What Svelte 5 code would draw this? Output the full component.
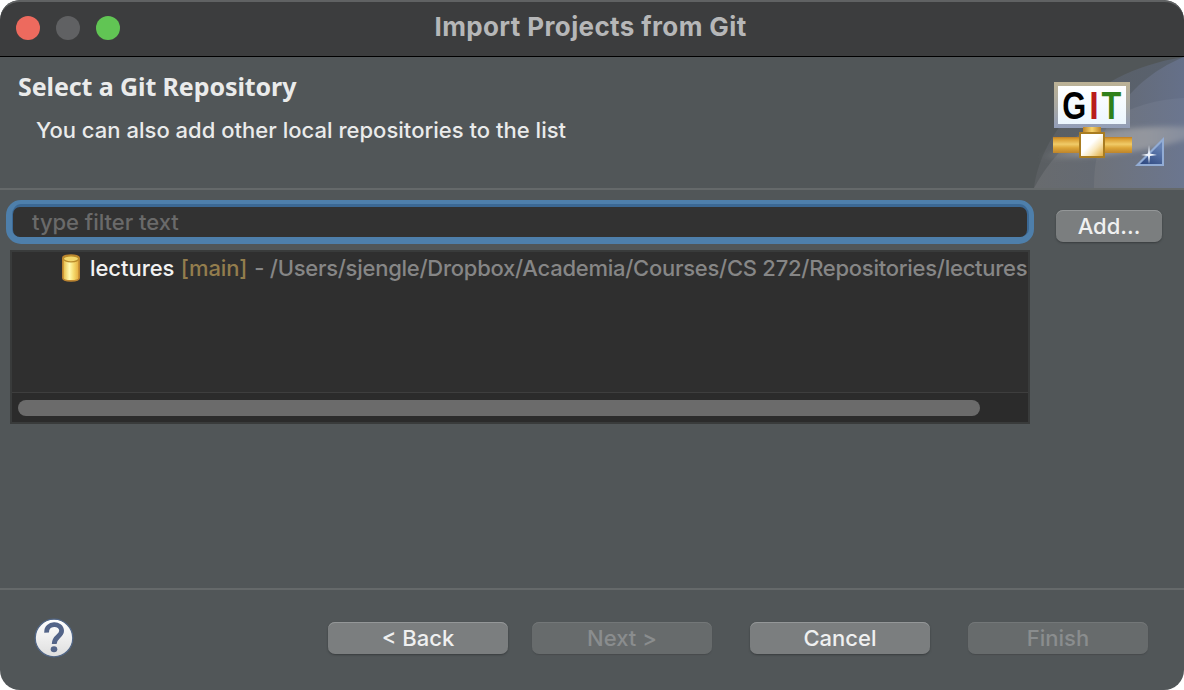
<script>
  const repo = {
    name: 'lectures',
    branch: '[main]',
    path: '- /Users/sjengle/Dropbox/Academia/Courses/CS 272/Repositories/lectures'
  };
  let filter = $state('');
</script>

<div class="window">
  <header class="titlebar">
    <div class="lights"><i class="close"></i><i class="min"></i><i class="max"></i></div>
    <div class="title"><span>Import Projects from Git</span></div>
  </header>

  <section class="banner">
    <div class="copy">
      <h1><span>Select a Git Repository</span></h1>
      <p><span>You can also add other local repositories to the list</span></p>
    </div>
    <svg class="art" width="160" height="131" viewBox="1024 57 160 131" aria-hidden="true">
      <defs>
        <linearGradient id="sky" gradientUnits="userSpaceOnUse" x1="1034" x2="1184" y1="0" y2="0"><stop offset="0" stop-color="#686b6e"/><stop offset=".5" stop-color="#646a74"/><stop offset="1" stop-color="#657089"/></linearGradient>
        <linearGradient id="crescent" gradientUnits="userSpaceOnUse" x1="1034" x2="1184" y1="0" y2="0"><stop offset="0" stop-color="#5a5e61"/><stop offset="1" stop-color="#596270"/></linearGradient>
        <linearGradient id="inner" gradientUnits="userSpaceOnUse" x1="1094" x2="1184" y1="0" y2="0"><stop offset="0" stop-color="#6e7279"/><stop offset="1" stop-color="#6b768f"/></linearGradient>
        <linearGradient id="beam" x1="0" x2="1"><stop offset="0" stop-color="#a0a0a0" stop-opacity="0"/><stop offset=".3" stop-color="#a2a2a4" stop-opacity=".65"/><stop offset=".7" stop-color="#a0a2a6" stop-opacity=".75"/><stop offset="1" stop-color="#9ca1ac" stop-opacity=".5"/></linearGradient>
        <linearGradient id="frame" x2="0" y2="1"><stop offset="0" stop-color="#bcb295"/><stop offset=".5" stop-color="#aaa9a2"/><stop offset="1" stop-color="#929eb9"/></linearGradient>
        <linearGradient id="paper" x2="0" y2="1"><stop offset="0" stop-color="#fff"/><stop offset="1" stop-color="#ecf6fe"/></linearGradient>
        <linearGradient id="pipe" x2="0" y2="1"><stop offset="0" stop-color="#bd7d25"/><stop offset=".12" stop-color="#d99c30"/><stop offset=".45" stop-color="#f0cb68"/><stop offset=".68" stop-color="#dda638"/><stop offset="1" stop-color="#bd842b"/></linearGradient>
        <linearGradient id="stem"><stop offset="0" stop-color="#bd8429"/><stop offset=".5" stop-color="#f6d36d"/><stop offset="1" stop-color="#bd8429"/></linearGradient>
        <linearGradient id="hub" x1="0" y1="0" x2="1" y2="1"><stop offset=".45" stop-color="#fff"/><stop offset=".65" stop-color="#f9e8bd"/><stop offset="1" stop-color="#dda42f"/></linearGradient>
        <linearGradient id="tri" x1="0" y1="1" x2=".5" y2="0"><stop offset="0" stop-color="#2d477f"/><stop offset="1" stop-color="#6682b4"/></linearGradient>
        <filter id="soft" x="-20%" y="-40%" width="140%" height="180%"><feGaussianBlur stdDeviation="4 2.6"/></filter>
      </defs>
      <path d="M1034 188C1039 144 1080 73 1184 57V188Z" fill="url(#crescent)"/>
      <path d="M1094 188C1093 141 1120 83 1184 57V188Z" fill="url(#sky)"/>
      <path d="M1034 188C1060 139 1111 102 1184 98V188Z" fill="url(#sky)"/>
      <path d="M1094 188C1094 160 1099 143 1110 120C1132 106 1158 99 1184 98V188Z" fill="url(#inner)"/>
      <path d="M1040 157L1100 132Q1150 125 1194 127V137Q1130 158 1040 159Z" fill="url(#beam)" filter="url(#soft)"/>
      <path d="M1164 137V166H1135Z" fill="#92acd4"/>
      <path d="M1162 142V164H1140Z" fill="url(#tri)"/>
      <path d="M1149 145L1150 153.6L1157 155L1150 156L1149 164L1148 156L1141 155L1148 153.8Z" fill="#eff4fc"/>
      <rect x="1054" y="82" width="76" height="46" fill="url(#frame)"/>
      <rect x="1058" y="86" width="68" height="38" fill="url(#paper)"/>
      <g class="git">
        <text transform="translate(1062.2 119) scale(.79 1)">G</text>
        <text transform="translate(1089.3 119) scale(.87 1)" fill="#b91c1b">I</text>
        <text transform="translate(1101.4 119) scale(.83 1)" fill="#30811b">T</text>
      </g>
      <rect x="1083" y="127" width="18" height="6" fill="url(#stem)"/>
      <rect x="1053" y="137" width="79" height="16" fill="url(#pipe)"/>
      <rect x="1080" y="133" width="24" height="24" fill="url(#hub)" stroke="#a97c21" stroke-width="2"/>
    </svg>
  </section>

  <main>
    <div class="left">
      <label class="search"><input bind:value={filter} placeholder="type filter text" /></label>
      <div class="list">
        <div class="row">
          <svg width="20" height="30" viewBox="0 0 20 30" aria-hidden="true">
            <defs><linearGradient id="gold"><stop offset="0" stop-color="#e5b73c"/><stop offset=".4" stop-color="#fffab0"/><stop offset=".65" stop-color="#f6dc70"/><stop offset="1" stop-color="#e2a737"/></linearGradient></defs>
            <path d="M1.8 5C1.8 1.2 18.2 1.2 18.2 5V25C18.2 28.8 1.8 28.8 1.8 25Z" fill="url(#gold)" stroke="#bb8430" stroke-width="1.6"/>
            <ellipse cx="10" cy="5.8" rx="7.6" ry="3" fill="#f1d66b" stroke="#b98b2b" stroke-width="1.2"/>
          </svg>
          <span class="name">{repo.name}</span>
          <span class="branch">{repo.branch}</span>
          <span class="path">{repo.path}</span>
        </div>
        <div class="scroll"><div class="thumb"></div></div>
      </div>
    </div>
    <button class="add"><span>Add...</span></button>
  </main>

  <footer>
    <svg class="help" width="40" height="40" viewBox="0 0 40 40" aria-label="Help">
      <defs><linearGradient id="ball" x2="0" y2="1"><stop offset="0" stop-color="#fff"/><stop offset="1" stop-color="#dedede"/></linearGradient></defs>
      <circle cx="20" cy="20" r="18.8" fill="url(#ball)" stroke="#516686" stroke-width="1.3"/>
      <path d="M12.6 14.6C12.2 4.4 27.6 4.4 27.6 12.8C27.6 18.6 20.2 18.4 20.2 26" fill="none" stroke="#536488" stroke-width="4.8"/>
      <ellipse cx="20" cy="31.3" rx="3.3" ry="3" fill="#536488"/>
    </svg>
    <div class="nav">
      <button><span>&lt; Back</span></button>
      <button disabled><span>Next &gt;</span></button>
    </div>
    <div class="actions">
      <button><span>Cancel</span></button>
      <button disabled><span>Finish</span></button>
    </div>
  </footer>
</div>

<style>
  :global(body) { margin: 0; background: #fff; }
  .window { box-sizing: border-box; width: 1184px; height: 690px; border-radius: 20px; overflow: hidden; display: flex; flex-direction: column; background: #515658; color: #eaebeb; font: 450 22px/28px Inter, sans-serif; white-space: nowrap; }
  .titlebar { box-sizing: border-box; height: 57px; flex: none; display: grid; grid-template-columns: 140px 1fr 140px; align-items: center; background: #3c3d3e; border-top: 2px solid #606263; border-bottom: 1px solid #000; border-radius: 20px 20px 0 0; }
  .lights { display: flex; gap: 16px; padding: 0 0 2px 16px; }
  .lights i { width: 24px; height: 24px; border-radius: 50%; }
  .close { background: #ed6a5e; }
  .min { background: #606163; }
  .max { background: #61c554; }
  .title { text-align: center; font-size: 26px; font-weight: 700; color: #b6b7b8; padding: 0 3px 4px 0; letter-spacing: .38px; }
  .banner { height: 131px; flex: none; display: flex; justify-content: space-between; border-bottom: 2px solid #65696a; }
  .copy { padding: 13px 0 0 18px; }
  h1 { margin: 0; font: 700 25px/32px "Noto Sans", sans-serif; letter-spacing: -.09px; }
  p { margin: 14px 0 0 18px; letter-spacing: .02px; }
  main { height: 398px; flex: none; display: flex; align-items: flex-start; gap: 22px; padding-left: 6px; box-sizing: border-box; padding-top: 10px; }
  .left { width: 1028px; }
  .search { display: block; box-sizing: border-box; height: 44px; border: solid #4e7fab; border-width: 4px 5px 7px 6px; border-radius: 15px; background: #3b6894; padding: 3px 2px 0 1px; }
  input { display: block; box-sizing: border-box; width: 100%; height: 30px; border: 0; outline: 0; border-radius: 7px; background: #323232; padding: 0 0 0 19px; color: #eee; font: 450 22px/30px Inter, sans-serif; letter-spacing: -.03px; }
  input::placeholder { color: #6a6a6a; opacity: 1; }
  .list { margin: 6px 4px 0; height: 174px; box-sizing: border-box; border: 2px solid #393b3b; background: #2f2f2f; display: flex; flex-direction: column; justify-content: space-between; overflow: hidden; }
  .row { display: flex; align-items: center; height: 32px; padding-left: 49px; }
  .row svg { flex: none; margin-right: 9px; }
  .name { color: #f2f2f2; margin-right: 6.5px; letter-spacing: -.05px; }
  .branch { color: #937d4d; margin-right: 7px; letter-spacing: -.13px; }
  .path { color: #868686; letter-spacing: -.26px; }
  .scroll { height: 30px; box-sizing: border-box; border-top: 1px solid #3e3e3e; background: #2b2b2b; padding: 7px 6px; }
  .thumb { width: 962px; height: 16px; border-radius: 8px; background: #6b6b6b; }
  button { width: 180px; height: 32px; border: 0; border-radius: 7px; padding: 0; background: #7b7e7f; color: #eff0f0; font: 450 22px/32px Inter, sans-serif; box-shadow: inset 0 1px #949798, 0 1px 2px #383c3e; }
  button:disabled { background: #676b6c; color: #8a8d8e; box-shadow: inset 0 1px #737778, 0 1px 1px #474b4d; }
  .add { width: 106px; margin-top: 10px; }
  footer { box-sizing: border-box; height: 102px; border-top: 2px solid #65696a; display: flex; padding: 32px 36px 0 34px; align-items: flex-start; }
  .help { margin: -4px 254px 0 0; }
  .nav { display: flex; gap: 24px; margin-right: 38px; }
  .actions { display: flex; gap: 38px; }
  .git { font: 700 39px "Liberation Sans", sans-serif; }
</style>
